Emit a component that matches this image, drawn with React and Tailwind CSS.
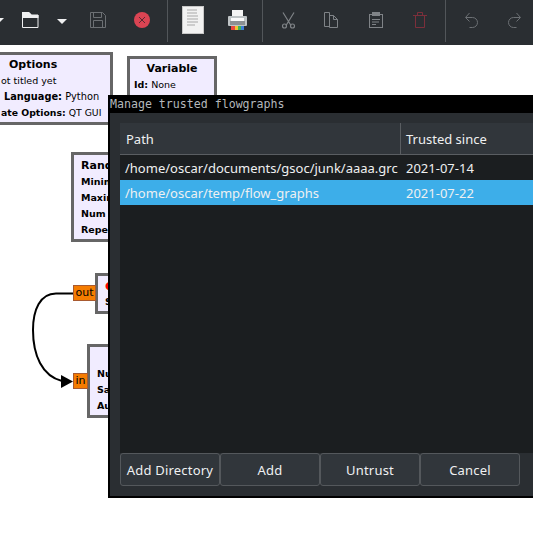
import React from "react";

const ui = { fontFamily: '"Noto Sans", sans-serif' };
const blockFont = { fontFamily: '"DejaVu Sans", sans-serif' };

function Sep({ className }) {
  return <div className={`absolute top-0 w-px h-[42px] bg-[#52565a] ${className}`} />;
}

function Toolbar() {
  return (
    <div className="relative h-[45px] bg-[#2a2e32] shrink-0">
      <svg width="533" height="45" className="absolute left-0 top-0">
        <path d="M-6 18h10l-5 5z" fill="#eff0f1" />
        {/* open folder */}
        <path d="M22.500 12.500h6l3 2.500h6.500v12.500h-15.500z" fill="none" stroke="#eff0f1" strokeWidth="1" />
        <path d="M22 12h7l3 3h6.500v3h-16.500z" fill="#eff0f1" />
        <path d="M57 19h10l-5 5z" fill="#eff0f1" />
        {/* save */}
        <g fill="none" stroke="#6c7074" strokeWidth="1">
          <path d="M90.500 12.500h12l3 3v12h-15z" />
          <path d="M93.500 12.500v5h8v-5M93.500 27.500v-7h9v7" />
        </g>
        {/* close */}
        <circle cx="142" cy="20" r="8" fill="#da4453" />
        <path d="M139 17l6 6M145 17l-6 6" stroke="#5a2a32" strokeWidth="1" />
        {/* doc */}
        <rect x="182.500" y="6.500" width="21" height="27" fill="#f2f2f2" stroke="#c8c8c8" />
        <path d="M187 10h10M187 13h10M187 16h11M187 19h11M187 22h11M187 25h8" stroke="#a8a8a8" strokeWidth="1" />
        {/* printer */}
        <rect x="232" y="10" width="11" height="8" fill="#f4f4f4" />
        <rect x="228" y="16" width="19" height="10" rx="1" fill="#bfc4c6" />
        <rect x="231" y="18" width="13" height="3" fill="#fafafa" />
        <rect x="230" y="21" width="15" height="4" fill="#8b9093" />
        <rect x="231" y="26" width="4" height="4" fill="#e8483f" />
        <rect x="235" y="26" width="3" height="4" fill="#f2c230" />
        <rect x="238" y="26" width="3" height="4" fill="#3fb455" />
        <rect x="241" y="26" width="3" height="4" fill="#3f7fd8" />
        {/* scissors */}
        <g fill="none" stroke="#7f8387" strokeWidth="1.2">
          <path d="M283 12.500l8 13M294 12.500l-8 13" />
          <circle cx="284.500" cy="26" r="2" />
          <circle cx="292.500" cy="26" r="2" />
        </g>
        {/* copy */}
        <g fill="none" stroke="#7f8387" strokeWidth="1">
          <path d="M324.500 12.500h5v14h-5z" />
          <path d="M329.500 15.500h4l4 4v8h-8z" />
          <path d="M333.500 15.500v4h4" />
        </g>
        {/* paste */}
        <g fill="none" stroke="#7f8387" strokeWidth="1">
          <rect x="369.500" y="14.500" width="13" height="13" />
          <path d="M372 19.500h8M372 22h7M372 24.500h4" />
        </g>
        <rect x="372" y="12" width="8" height="4" fill="#7f8387" />
        {/* trash */}
        <g fill="none" stroke="#7c2f3b" strokeWidth="1">
          <path d="M413 15.500h14M415.500 15.500v12h9v-12M417.500 15v-2.500h5v2.500" />
        </g>
        {/* undo */}
        <g fill="none" stroke="#6c7074" strokeWidth="1">
          <path d="M466 17.500h6.500a5 5 0 0 1 0 10h-3" />
          <path d="M469.500 13l-4 4.500l4 4" />
        </g>
        {/* redo */}
        <g fill="none" stroke="#6c7074" strokeWidth="1">
          <path d="M520 17.500h-6.500a5 5 0 0 0 0 10h3" />
          <path d="M516.500 13l4 4.500l-4 4" />
        </g>
      </svg>
      <Sep className="left-[167px]" />
      <Sep className="left-[262px]" />
      <Sep className="left-[445px]" />
    </div>
  );
}

function Block({ className, children }) {
  return (
    <div
      className={`absolute bg-[#f1ecff] border-[3px] border-[#666666] text-[9.5px] leading-[16px] text-black overflow-hidden whitespace-nowrap ${className}`}
      style={blockFont}
    >
      {children}
    </div>
  );
}

function Port({ className, children }) {
  return (
    <div
      className={`absolute h-[16px] bg-[#f57c00] border border-[#a85a30] text-[11px] leading-[14px] text-black text-center ${className}`}
      style={blockFont}
    >
      {children}
    </div>
  );
}

function Canvas() {
  return (
    <div className="relative h-[512px] bg-white overflow-hidden">
      <Block className="left-[-20px] top-[7px] w-[133px] h-[73px]">
        <div className="font-bold text-[11px] pt-[2px] leading-[15px] pl-[26px]">Options</div>
        <div className="pl-[18px] leading-[17px]">ot titled yet</div>
        <div className="pl-[21px] text-[9.8px]"><b>Language:</b> Python</div>
        <div className="pl-[18px] text-[9.3px]"><b>ate Options:</b> QT GUI</div>
      </Block>
      <Block className="left-[127px] top-[11px] w-[90px] h-[60px] px-[4px]">
        <div className="text-center font-bold text-[11px] pt-[1px] leading-[17px]">Variable</div>
        <div><b>Id:</b> None</div>
      </Block>
      <Block className="left-[71px] top-[107px] w-[60px] h-[90px] pl-[7px] font-bold">
        <div className="text-[11px] pt-[2px] leading-[17px]">Random</div>
        <div>Minimum</div>
        <div>Maximum</div>
        <div>Num</div>
        <div>Repeat</div>
      </Block>
      <Block className="left-[95px] top-[228px] w-[30px] h-[41px] pl-[7px] font-bold">
        <div className="text-[11px] leading-[16px] pt-[2px]"><span className="text-[#ff0000]">●</span></div>
        <div>S</div>
      </Block>
      <Block className="left-[87px] top-[299px] w-[40px] h-[74px] pl-[7px] pt-[19px] font-bold">
        <div>Num</div>
        <div>Sa</div>
        <div>Au</div>
      </Block>
      <Port className="left-[73px] top-[240px] w-[23px]">out</Port>
      <Port className="left-[73px] top-[328px] w-[15px]">in</Port>
      <svg width="80" height="110" className="absolute left-0 top-[235px]">
        <path d="M73 13.500 H56 C40 13.500 33 30 33 50 C33 75 42 96 62 101" fill="none" stroke="#000" strokeWidth="2" />
        <path d="M61 95 L73 101.500 L61 108 Z" fill="#000" />
      </svg>
    </div>
  );
}

function Row({ path, date, selected }) {
  return (
    <div className={`flex h-[25px] items-center pt-[2px] text-[13px] text-[#eff0f1] ${selected ? "bg-[#3daee9]" : ""}`}>
      <div className="w-[281px] pl-[5px] whitespace-nowrap">{path}</div>
      <div className="pl-[5px] whitespace-nowrap">{date}</div>
    </div>
  );
}

function Btn({ children }) {
  return (
    <div className="w-[100px] h-[33px] flex items-center justify-center pt-[2px] rounded-[3px] border border-[#54585c] bg-[#31363b] text-[13px] tracking-[0.2px] text-[#eff0f1] whitespace-nowrap">
      {children}
    </div>
  );
}

function Dialog() {
  return (
    <div className="absolute left-[108px] top-[95px] w-[425px] h-[403px] bg-black flex flex-col pl-[2px] pb-[2px]" style={ui}>
      <div
        className="h-[18px] shrink-0 text-[11.6px] leading-[19px] text-[#b4b8bc] whitespace-pre"
        style={{ fontFamily: '"DejaVu Sans Mono", monospace' }}
      >
        Manage trusted flowgraphs
      </div>
      <div className="flex-1 bg-[#2a2e32] pl-[10px] pt-[10px] flex flex-col min-h-0">
        <div className="h-[330px] bg-[#1b1e20] flex flex-col">
          <div className="flex h-[32px] bg-[#31363b] border-b border-[#5a5e62] text-[13px] text-[#eff0f1] shrink-0">
            <div className="w-[281px] pl-[6px] pt-[2px] flex items-center border-r border-[#5a5e62]">Path</div>
            <div className="pl-[5px] pt-[2px] flex items-center whitespace-nowrap">Trusted since</div>
          </div>
          <Row path="/home/oscar/documents/gsoc/junk/aaaa.grc" date="2021-07-14" />
          <Row path="/home/oscar/temp/flow_graphs" date="2021-07-22" selected />
        </div>
        <div className="flex">
          <Btn>Add Directory</Btn>
          <Btn>Add</Btn>
          <Btn>Untrust</Btn>
          <Btn>Cancel</Btn>
        </div>
      </div>
    </div>
  );
}

export default function App() {
  return (
    <div className="relative w-[533px] h-[557px] overflow-hidden bg-white flex flex-col">
      <Toolbar />
      <Canvas />
      <Dialog />
    </div>
  );
}
